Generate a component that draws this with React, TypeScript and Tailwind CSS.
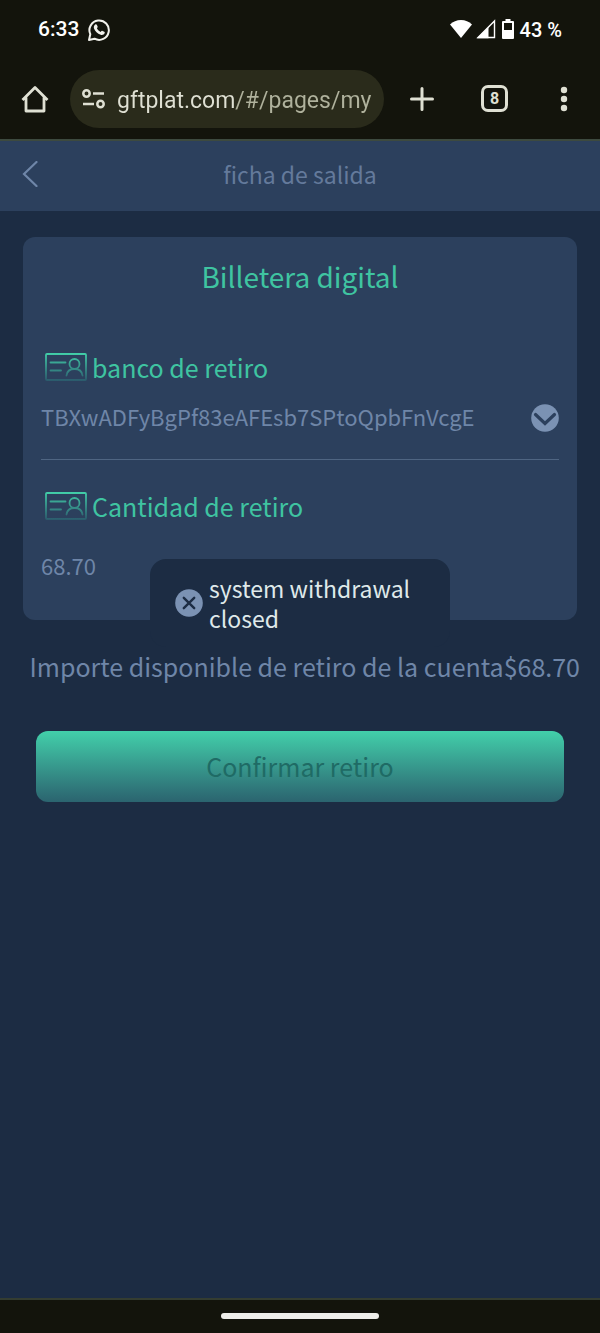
import { useState } from "react";

const WALLETS = ["TBXwADFyBgPf83eAFEsb7SPtoQpbFnVcgE"];

function StatusBar() {
  return (
    <div className="flex h-[60px] items-center justify-between px-[38px] font-[Roboto,sans-serif] text-xl font-medium text-white">
      <div className="flex items-center gap-2">
        <span className="text-[21px]">6:33</span>
        <svg viewBox="0 0 24 24" className="size-6" fill="none" aria-hidden>
          <path d="M2 22l1.3-5.8a9.7 9.7 0 1 1 4.2 4.5z" stroke="#f2f2ec" strokeWidth="2" strokeLinejoin="round" />
          <path
            d="M8.2 6.6c.5-.5 1.3-.4 1.6.2l.8 1.8c.2.5 0 .9-.7 1.7.9 1.7 2.1 2.9 3.9 3.6.8-1 1.2-1.2 1.7-1l1.8.9c.5.3.6.7.4 1.3-.5 1.6-2.4 2.2-4 1.7-3.3-1-5.6-3.2-6.7-6.2-.5-1.6.1-3 1.2-4z"
            fill="#f2f2ec"
          />
        </svg>
      </div>
      <div className="flex items-center gap-1">
        <svg viewBox="0 0 22 18" className="mb-0.5 h-[18px] w-[22px]" aria-hidden>
          <path d="M11 18L0 4.5C3 1.7 6.7 0 11 0s8 1.7 11 4.5z" fill="#fff" />
        </svg>
        <svg viewBox="0 0 20 20" className="mb-0.5 size-5" aria-hidden>
          <path d="M18.5 2v16.5H2z" fill="none" stroke="#fff" strokeWidth="1.4" />
          <path d="M1 19.2L12.5 8v11.2z" fill="#fff" />
        </svg>
        <svg viewBox="0 0 12 20" className="mb-0.5 ml-0.5 h-5 w-3" aria-hidden>
          <path d="M3.5 0h5v2H11a1 1 0 0 1 1 1v16a1 1 0 0 1-1 1H1a1 1 0 0 1-1-1V3a1 1 0 0 1 1-1h2.5zM2 4v7h8V4z" fill="#fff" fillRule="evenodd" />
        </svg>
        <span className="ml-0.5">43 %</span>
      </div>
    </div>
  );
}

function BrowserBar() {
  return (
    <div className="flex h-[79px] items-center pb-0.5 pl-5 text-[#dfe0d3]">
      <button aria-label="Home" className="mr-5">
        <svg viewBox="0 0 30 30" className="size-[30px]" fill="none" stroke="currentColor" strokeWidth="2.8" strokeLinejoin="round" aria-hidden>
          <path d="M2.5 16L15 3.5 27.5 16M6 13.5V27h18V13.5" />
        </svg>
      </button>
      <div className="flex h-[58px] min-w-0 flex-1 items-center rounded-full bg-[#2a2b1b] pr-[11px] pl-3">
        <svg viewBox="0 0 24 20" className="mr-[11px] h-5 w-6 shrink-0" fill="none" stroke="currentColor" strokeWidth="2.5" aria-hidden>
          <circle cx="4.5" cy="4.5" r="3.2" />
          <path d="M11 4.5h11M1 15h11" />
          <circle cx="18.5" cy="15" r="3.2" />
        </svg>
        {/* host is brighter than the path */}
        <input
          type="text"
          aria-label="Address"
          defaultValue="gftplat.com/#/pages/my"
          className="min-w-0 flex-1 bg-linear-to-r from-[#dfe0d3] from-[118px] to-[#b0b29d] to-[119px] bg-clip-text pt-1 font-[Roboto,sans-serif] text-[23px] leading-8 text-[#dfe0d3] outline-none [-webkit-text-fill-color:transparent]"
        />
      </div>
      <button aria-label="New tab" className="ml-[26px]">
        <svg viewBox="0 0 24 24" className="size-6" stroke="currentColor" strokeWidth="3" strokeLinecap="round" aria-hidden>
          <path d="M12 1.5v21M1.5 12h21" />
        </svg>
      </button>
      <button
        aria-label="Switch tabs"
        className="ml-[47px] flex size-[27px] items-center justify-center rounded-[7px] border-[3px] border-[#dfe0d3] font-[Roboto,sans-serif] text-base font-bold"
      >
        8
      </button>
      <button aria-label="More options" className="mr-8 ml-[52px]">
        <svg viewBox="0 0 8 26" className="h-[26px] w-2" fill="currentColor" aria-hidden>
          <circle cx="4" cy="4" r="3.2" />
          <circle cx="4" cy="13" r="3.2" />
          <circle cx="4" cy="22" r="3.2" />
        </svg>
      </button>
    </div>
  );
}

function CardIcon({ id }: { id: string }) {
  return (
    <svg viewBox="0 0 42 28" className="h-7 w-[42px]" fill="none" stroke={`url(#${id})`} strokeWidth="1.8" strokeLinecap="round" aria-hidden>
      <defs>
        <linearGradient id={id} gradientUnits="userSpaceOnUse" x1="0" y1="0" x2="0" y2="28">
          <stop offset="0" stopColor="#42cfa9" />
          <stop offset="1" stopColor="#2b5a6c" />
        </linearGradient>
      </defs>
      <rect x="1" y="1" width="40" height="26" rx="1" />
      <path d="M5.5 9.5h15M5.5 17.5h10.5" />
      <circle cx="29.5" cy="11" r="5" />
      <path d="M21.5 22.5c.5-4 3.5-6.5 8-6.5s7.5 2.5 8 6.5" />
    </svg>
  );
}

export default function App() {
  const [wallet, setWallet] = useState(WALLETS[0]);
  const [amount, setAmount] = useState("68.70");

  return (
    <div className="flex min-h-screen flex-col bg-[#1c2c43] font-['Noto_Sans_CJK_SC',sans-serif] text-[#6f86a8]">
      <div className="border-b-2 border-[#3d4a3f] bg-[#13140c]">
        <StatusBar />
        <BrowserBar />
      </div>

      <header className="grid h-[70px] grid-cols-[60px_1fr_60px] items-center bg-[#2c405d] pb-1 text-[#647a9b]">
        <button aria-label="Volver" className="pl-[22px]">
          <svg viewBox="0 0 16 26" className="h-[26px] w-4" fill="none" stroke="#6f86a8" strokeWidth="2.2" strokeLinecap="round" aria-hidden>
            <path d="M14.5 1L2 13l12.5 12" />
          </svg>
        </button>
        <h1 className="text-center text-[23px] leading-9">ficha de salida</h1>
      </header>

      <main className="flex-1">
        <section className="relative mx-[23px] mt-[26px] h-[383px] rounded-xl bg-[#2c405d] px-[18px] pt-[18px]">
          <h2 className="text-center text-[28px] leading-[42px] text-[#3fc4a1]">Billetera digital</h2>

          <label htmlFor="bank" className="mt-[52px] flex items-center gap-[5px] pl-1 text-[25px] leading-9 text-[#3fc4a1]">
            <CardIcon id="bank-icon" />
            banco de retiro
          </label>
          <div className="mt-2 flex items-center border-b border-[#4f6582] pb-5">
            <select
              id="bank"
              value={wallet}
              onChange={(e) => setWallet(e.target.value)}
              className="h-[46px] min-w-0 flex-1 appearance-none bg-transparent text-[22px] outline-none"
            >
              {WALLETS.map((w) => (
                <option key={w}>{w}</option>
              ))}
            </select>
            <svg viewBox="0 0 28 28" className="pointer-events-none mt-1 size-7" fill="none" aria-hidden>
              <circle cx="14" cy="14" r="13.8" fill="#7b92b3" />
              <path d="M4.5 10.5l9.5 9 9.5-9" stroke="#2c405d" strokeWidth="3.2" strokeLinecap="round" />
            </svg>
          </div>

          <label htmlFor="amount" className="mt-7 flex items-center gap-[5px] pl-1 text-[25px] leading-9 text-[#3fc4a1]">
            <CardIcon id="amount-icon" />
            Cantidad de retiro
          </label>
          <input
            id="amount"
            type="text"
            inputMode="decimal"
            value={amount}
            onChange={(e) => setAmount(e.target.value)}
            className="mt-[18px] h-[46px] w-full bg-transparent text-[22px] outline-none"
          />

          <div
            role="alert"
            className="absolute top-[322px] left-1/2 flex w-[300px] -translate-x-1/2 items-center gap-1.5 rounded-2xl bg-[#1c2c43] py-3.5 pr-5 pl-[25px] text-[23px] leading-[30px] text-[#dfe9ea]"
          >
            <svg viewBox="0 0 28 28" className="size-7 shrink-0" aria-hidden>
              <circle cx="14" cy="14" r="13.8" fill="#7b92b3" />
              <path d="M8.8 8.8l10.4 10.4M19.2 8.8L8.8 19.2" stroke="#1c2c43" strokeWidth="2.4" strokeLinecap="round" />
            </svg>
            system withdrawal closed
          </div>
        </section>

        <p className="mt-[26px] mr-5 text-right text-[25px] leading-10 whitespace-nowrap">
          Importe disponible de retiro de la cuenta$68.70
        </p>

        <div className="mt-[45px] px-9">
          <button className="h-[71px] w-full rounded-xl bg-linear-to-b from-[#42d0aa] to-[#2b646f] text-[25px] text-[#1f6b65]">
            Confirmar retiro
          </button>
        </div>
      </main>

      <footer className="flex h-[35px] items-center justify-center border-t-2 border-[#343d31] bg-[#13140c] pb-0.5">
        <div className="h-1.5 w-[158px] rounded-full bg-[#eeeeea]" />
      </footer>
    </div>
  );
}
